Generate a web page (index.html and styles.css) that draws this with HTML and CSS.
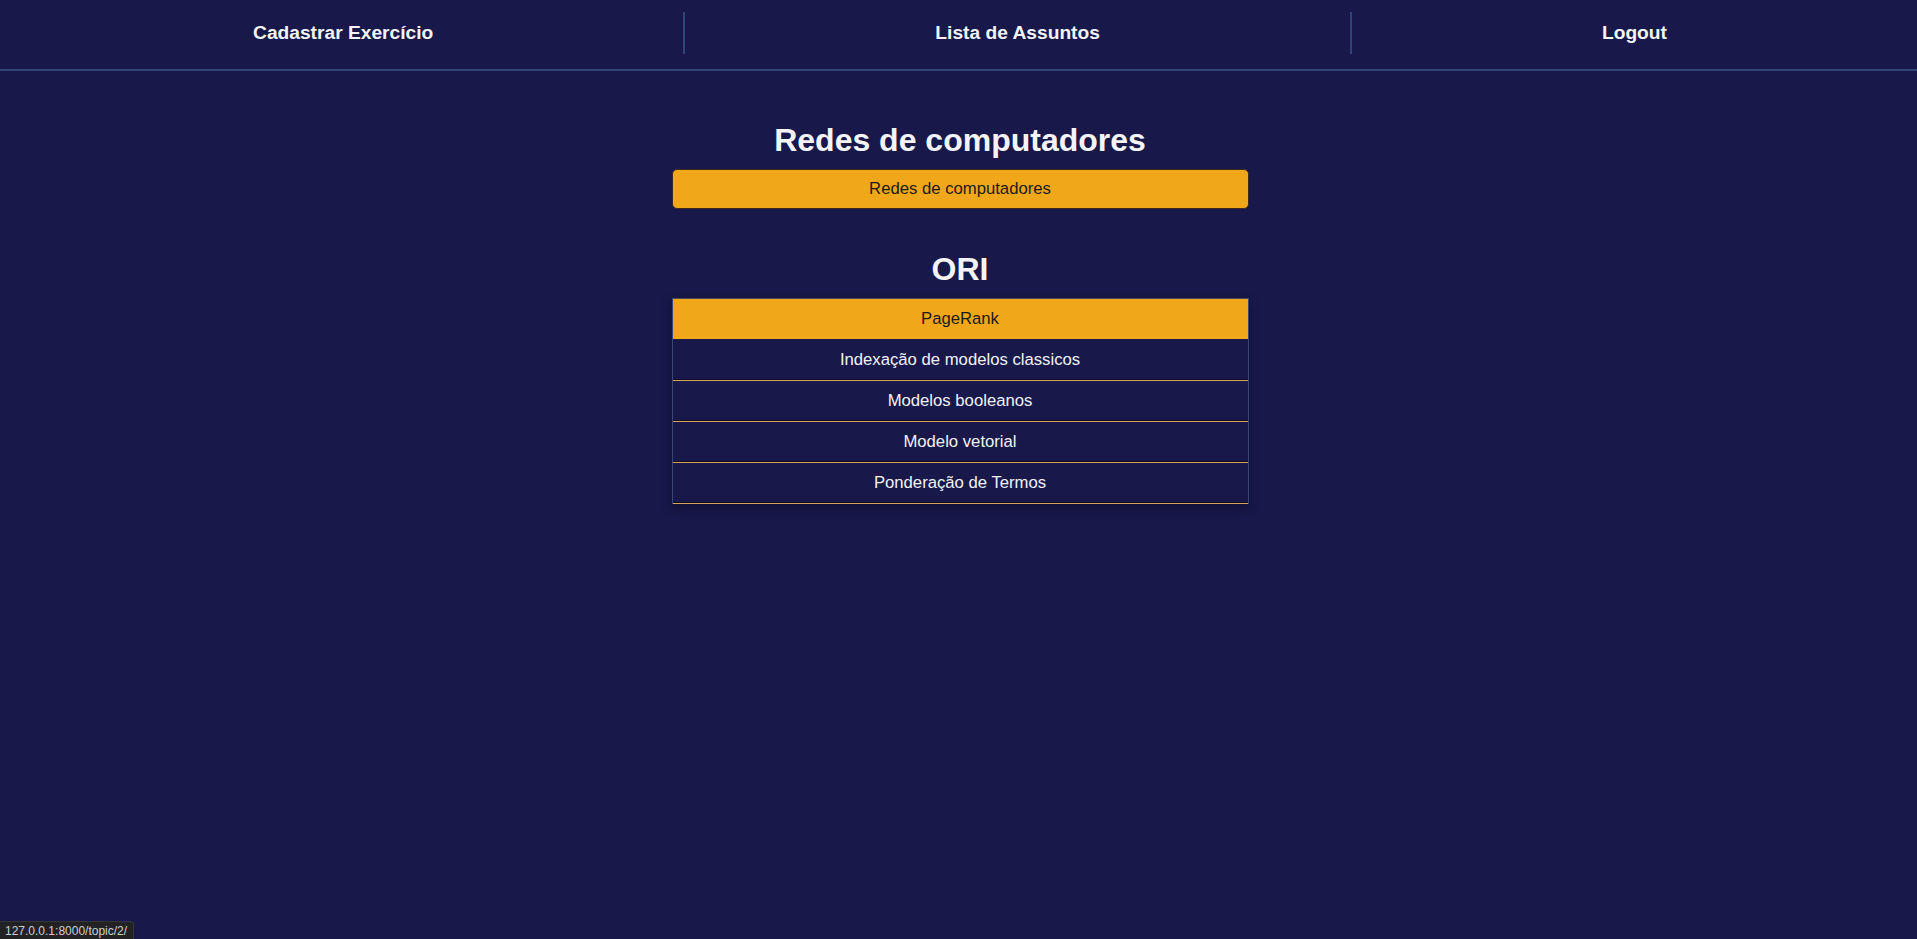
FILE: index.html
```html
<!DOCTYPE html>
<html lang="pt-BR">
<head>
<meta charset="utf-8">
<title>Assuntos</title>
<link rel="stylesheet" href="styles.css">
</head>
<body>
<nav class="topnav">
  <a class="nav-item" href="#">Cadastrar Exercício</a>
  <a class="nav-item" href="#">Lista de Assuntos</a>
  <a class="nav-item" href="#">Logout</a>
</nav>
<main class="content">
  <section class="subject">
    <h1 class="subject-title">Redes de computadores</h1>
    <div class="topic-list">
      <a class="topic topic-active topic-rounded" href="#">Redes de computadores</a>
    </div>
  </section>
  <section class="subject">
    <h1 class="subject-title">ORI</h1>
    <div class="topic-list topic-list-bordered">
      <a class="topic topic-active" href="#">PageRank</a>
      <a class="topic" href="#">Indexação de modelos classicos</a>
      <a class="topic" href="#">Modelos booleanos</a>
      <a class="topic" href="#">Modelo vetorial</a>
      <a class="topic" href="#">Ponderação de Termos</a>
    </div>
  </section>
</main>
<div class="status-bar">127.0.0.1:8000/topic/2/</div>
</body>
</html>
```
FILE: styles.css
```css
html, body {
  margin: 0;
  padding: 0;
  height: 100%;
}
body {
  background: #18194a;
  color: #f2f2f2;
  font-family: "Liberation Sans", Arial, sans-serif;
}
a {
  text-decoration: none;
  color: inherit;
}
.topnav {
  display: flex;
  align-items: center;
  height: 69px;
  padding: 0 0 0 3px;
  box-sizing: content-box;
  border-bottom: 2px solid #2e4676;
}
.nav-item {
  flex: 1 1 auto;
  height: 42px;
  margin-top: -3px;
  display: flex;
  align-items: center;
  justify-content: center;
  font-size: 19.2px;
  font-weight: bold;
  color: #f4f4f8;
  padding-bottom: 1px;
  box-sizing: border-box;
}
.nav-item + .nav-item {
  border-left: 2px solid #2e4676;
}
.content {
  display: flex;
  flex-direction: column;
  align-items: center;
  gap: 42px;
  padding: 51px 0 0 3px;
}
.subject {
  width: 577px;
  display: flex;
  flex-direction: column;
}
.subject-title {
  margin: 0 0 10px;
  font-size: 32px;
  line-height: 37px;
  font-weight: bold;
  text-align: center;
  color: #f4f4f8;
}
.topic-list {
  display: flex;
  flex-direction: column;
}
.topic-list-bordered {
  border: 1px solid #3a4678;
  border-top-color: #4a4a5a;
  border-bottom: none;
  box-shadow: 0 4px 10px rgba(5, 5, 25, 0.45);
}
.topic {
  height: 41px;
  display: flex;
  align-items: center;
  justify-content: center;
  font-size: 16.7px;
  color: #f2f2f6;
  border-bottom: 1px solid #dca25a;
  box-shadow: inset 0 -1px 0 #0e0c24;
  box-sizing: border-box;
}
.topic-active {
  background: #f0a81a;
  color: #1c1a1a;
  border-bottom-color: #18194a;
  box-shadow: none;
}
.topic-rounded {
  height: 40px;
  border: 1px solid #3a2a20;
  border-radius: 5px;
}
.status-bar {
  position: fixed;
  left: 0;
  bottom: 0;
  height: 17px;
  padding: 0 6px 0 5px;
  display: flex;
  align-items: center;
  background: #222225;
  color: #cfcfcf;
  font-family: "Liberation Sans", sans-serif;
  font-size: 12px;
  border-top-right-radius: 4px;
  border: 1px solid #353535;
  border-left: none;
  border-bottom: none;
}
```
